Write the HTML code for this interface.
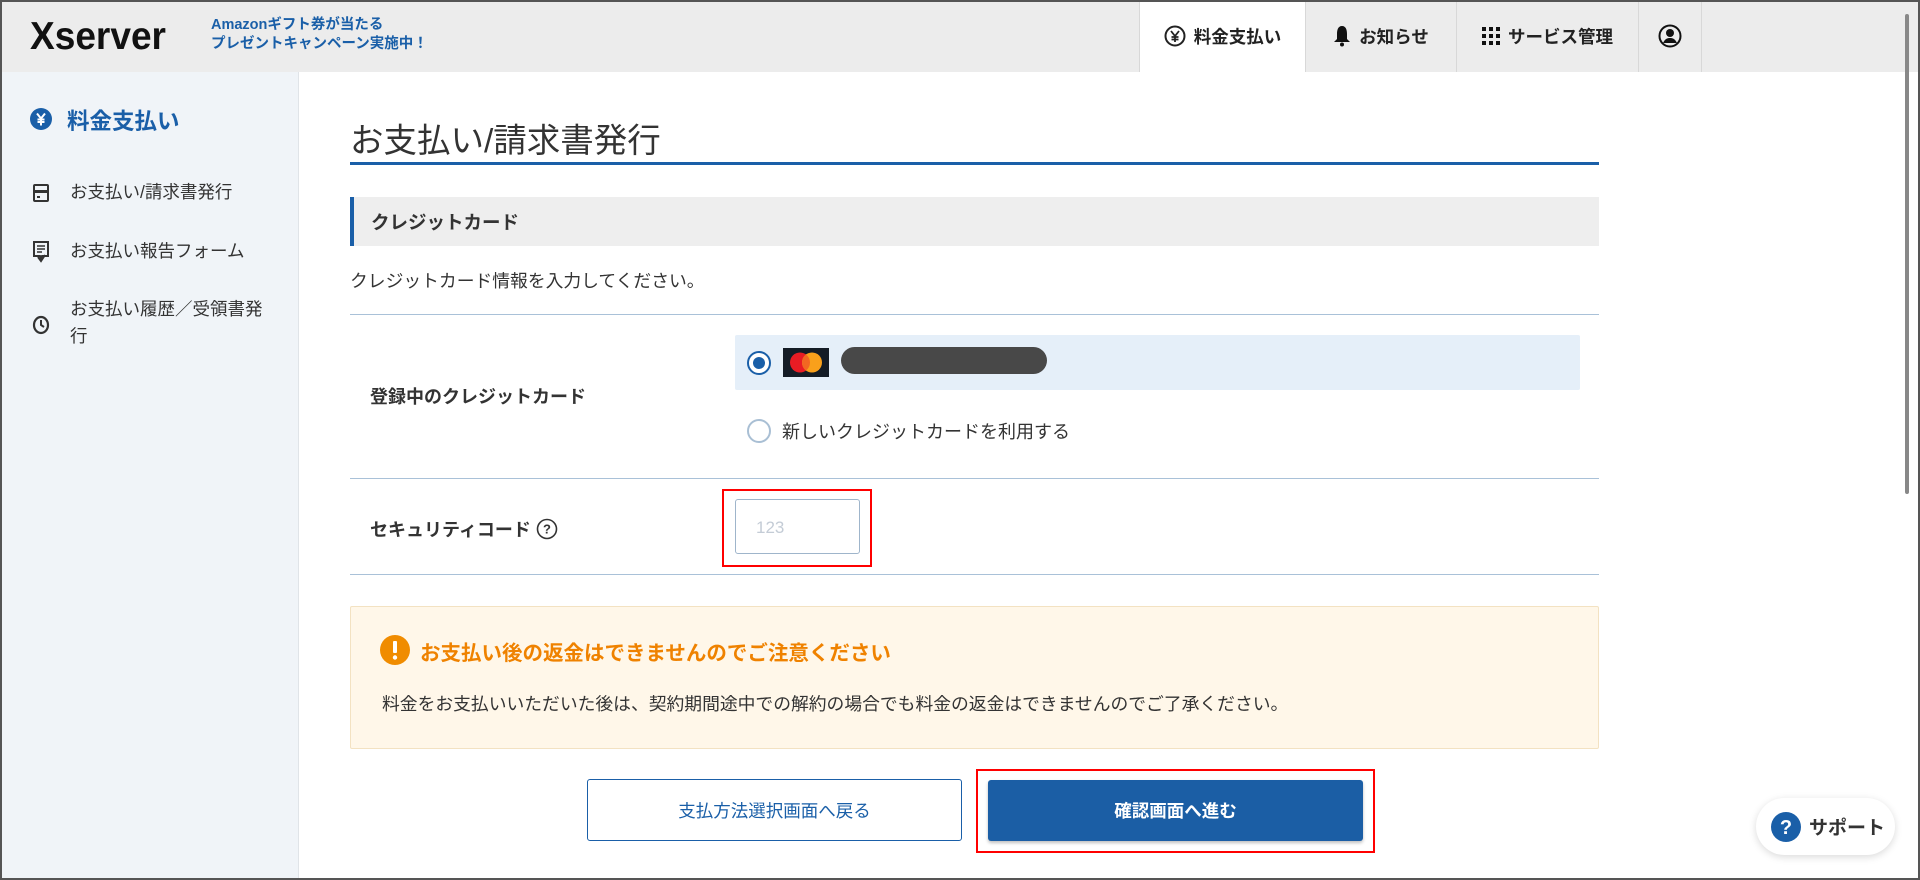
<!DOCTYPE html>
<html><head><meta charset="utf-8"><style>
*{margin:0;padding:0;box-sizing:border-box}
body{width:1920px;height:880px;overflow:hidden;position:relative;background:#fff;font-family:"Liberation Sans","Noto Sans CJK JP",sans-serif;color:#333}
.a{position:absolute}
#frame{left:0;top:0;width:1920px;height:880px;border:2px solid #555;border-top-width:2px;z-index:50;pointer-events:none}
#hdr{left:0;top:0;width:1920px;height:72px;background:#ececec}
.tab{top:0;height:72px;display:flex;align-items:center;justify-content:center;font-size:17.5px;font-weight:bold;color:#222;border-left:1px solid #d8d8d8;gap:8px}
#side{left:0;top:72px;width:299px;height:808px;background:#f0f4f8;border-right:1px solid #e0e4e8}
.si{left:70px;font-size:17.5px;color:#333;line-height:27px}
.hr{left:350px;width:1249px;height:1px;background:#a9c1d8}
</style></head><body>
<div class="a" id="hdr"></div>
<div class="a" style="left:30px;top:15px;font-size:39px;font-weight:bold;color:#111;letter-spacing:0;line-height:44px;transform:scaleX(0.95);transform-origin:left">Xserver</div>
<div class="a" style="left:211px;top:16px;font-size:14.5px;font-weight:bold;color:#1a5fa8;line-height:19px">Amazonギフト券が当たる<br>プレゼントキャンペーン実施中！</div>
<div class="a tab" style="left:1139px;width:166px;background:#fff"><svg width="22" height="22" viewBox="0 0 22 22"><circle cx="11" cy="11" r="9.5" fill="none" stroke="#222" stroke-width="2"/><path d="M7 6l4 5 4-5M11 11v6M7.5 12h7M7.5 14.5h7" stroke="#222" stroke-width="1.8" fill="none"/></svg>料金支払い</div>
<div class="a tab" style="left:1305px;width:151px"><svg width="18" height="22" viewBox="0 0 18 22"><path d="M9 1c-4 0-5 4-5 8v5l-3 3h16l-3-3v-5c0-4-1-8-5-8z" fill="#111"/><circle cx="9" cy="19.5" r="2" fill="#111"/></svg>お知らせ</div>
<div class="a tab" style="left:1456px;width:182px"><svg width="18" height="18" viewBox="0 0 18 18" fill="#111"><rect x="0" y="0" width="4" height="4"/><rect x="7" y="0" width="4" height="4"/><rect x="14" y="0" width="4" height="4"/><rect x="0" y="7" width="4" height="4"/><rect x="7" y="7" width="4" height="4"/><rect x="14" y="7" width="4" height="4"/><rect x="0" y="14" width="4" height="4"/><rect x="7" y="14" width="4" height="4"/><rect x="14" y="14" width="4" height="4"/></svg>サービス管理</div>
<div class="a tab" style="left:1638px;width:64px;border-right:1px solid #d8d8d8"><svg width="24" height="24" viewBox="0 0 24 24"><circle cx="12" cy="12" r="10.5" fill="none" stroke="#111" stroke-width="2"/><circle cx="12" cy="9" r="4" fill="#111"/><path d="M5 19c2-4 4-5 7-5s5 1 7 5z" fill="#111"/></svg></div>
<div class="a" style="left:1905px;top:14px;width:4px;height:480px;background:#888;border-radius:2px"></div>

<div class="a" id="side"></div>
<svg class="a" style="left:30px;top:108px" width="22" height="22" viewBox="0 0 22 22"><circle cx="11" cy="11" r="11" fill="#1a5fa8"/><path d="M7 5.5l4 5 4-5M11 10.5v7M7.5 11.5h7M7.5 14h7" stroke="#fff" stroke-width="2" fill="none"/></svg>
<div class="a" style="left:67px;top:104px;font-size:22.5px;font-weight:bold;color:#1a5fa8">料金支払い</div>
<svg class="a" style="left:33px;top:184px" width="16" height="18" viewBox="0 0 16 18"><rect x="1" y="1" width="14" height="16" rx="1" fill="none" stroke="#333" stroke-width="2"/><rect x="1" y="6" width="14" height="3" fill="#333"/><rect x="4" y="12" width="3" height="2" fill="#333"/></svg>
<div class="a si" style="top:179px">お支払い/請求書発行</div>
<svg class="a" style="left:33px;top:241px" width="16" height="22" viewBox="0 0 16 22"><path d="M1 1h14v14H9l-1 2-1-2H1z" fill="none" stroke="#333" stroke-width="2"/><path d="M4 5h8M4 8h8M4 11h5" stroke="#333" stroke-width="1.5"/><path d="M5 16l3 4 4-6" stroke="#333" stroke-width="2" fill="none"/></svg>
<div class="a si" style="top:238px">お支払い報告フォーム</div>
<svg class="a" style="left:32px;top:315px" width="18" height="20" viewBox="0 0 18 20"><ellipse cx="9" cy="10" rx="7" ry="8" fill="none" stroke="#333" stroke-width="2.2"/><path d="M9 5v5l3 2" stroke="#333" stroke-width="2" fill="none"/></svg>
<div class="a si" style="top:296px">お支払い履歴／受領書発<br>行</div>

<div class="a" style="left:350px;top:113px;font-size:33.5px;color:#333">お支払い/請求書発行</div>
<div class="a" style="left:350px;top:162px;width:1249px;height:3px;background:#1a5fa8"></div>
<div class="a" style="left:350px;top:197px;width:1249px;height:49px;background:#eeeeee;border-left:4px solid #1a5fa8"></div>
<div class="a" style="left:371px;top:209px;font-size:18.5px;font-weight:bold;color:#333">クレジットカード</div>
<div class="a" style="left:350px;top:267px;font-size:17.8px;color:#333">クレジットカード情報を入力してください。</div>
<div class="a hr" style="top:314px"></div>
<div class="a" style="left:370px;top:383px;font-size:18px;font-weight:bold">登録中のクレジットカード</div>
<div class="a" style="left:735px;top:335px;width:845px;height:55px;background:#e5eff9;border-radius:2px"></div>
<svg class="a" style="left:746px;top:350px" width="26" height="26" viewBox="0 0 26 26"><circle cx="13" cy="13" r="11" fill="#fff" stroke="#1a5fa8" stroke-width="2"/><circle cx="13" cy="13" r="6" fill="#1a5fa8"/></svg>
<svg class="a" style="left:783px;top:348px" width="46" height="29" viewBox="0 0 46 29"><rect width="46" height="29" fill="#141c26"/><circle cx="17" cy="14.5" r="10" fill="#e81c24"/><circle cx="29" cy="14.5" r="10" fill="#f9a01b"/><path d="M23 6.5a10 10 0 0 1 0 16a10 10 0 0 1 0-16z" fill="#f26722"/></svg>
<div class="a" style="left:841px;top:347px;width:206px;height:27px;background:#484848;border-radius:14px"></div>
<svg class="a" style="left:746px;top:418px" width="26" height="26" viewBox="0 0 26 26"><circle cx="13" cy="13" r="11" fill="#fff" stroke="#a9bfd4" stroke-width="2"/></svg>
<div class="a" style="left:782px;top:418px;font-size:18px;color:#333">新しいクレジットカードを利用する</div>
<div class="a hr" style="top:478px"></div>
<div class="a" style="left:370px;top:516px;font-size:18px;font-weight:bold">セキュリティコード</div>
<svg class="a" style="left:536px;top:518px" width="22" height="22" viewBox="0 0 22 22"><circle cx="11" cy="11" r="9.5" fill="none" stroke="#333" stroke-width="1.6"/><text x="11" y="15.5" font-size="13" font-weight="bold" text-anchor="middle" fill="#333" font-family="Liberation Sans">?</text></svg>
<div class="a" style="left:722px;top:489px;width:150px;height:78px;border:2px solid #ff0000"></div>
<div class="a" style="left:735px;top:499px;width:125px;height:55px;border:1px solid #9fb5cb;border-radius:3px;background:#fff"></div>
<div class="a" style="left:756px;top:518px;font-size:17px;color:#c4ccd6">123</div>
<div class="a hr" style="top:574px"></div>

<div class="a" style="left:350px;top:606px;width:1249px;height:143px;background:#fff7e9;border:1px solid #f3e2c2;border-radius:2px"></div>
<svg class="a" style="left:380px;top:635px" width="30" height="30" viewBox="0 0 30 30"><circle cx="15" cy="15" r="15" fill="#f08c00"/><rect x="13" y="6" width="4" height="12" rx="1" fill="#fff"/><circle cx="15" cy="22.5" r="2.2" fill="#fff"/></svg>
<div class="a" style="left:420px;top:636px;font-size:20.5px;font-weight:bold;color:#ef8200">お支払い後の返金はできませんのでご注意ください</div>
<div class="a" style="left:382px;top:690px;font-size:17.8px;color:#333">料金をお支払いいただいた後は、契約期間途中での解約の場合でも料金の返金はできませんのでご了承ください。</div>

<div class="a" style="left:587px;top:779px;width:375px;height:62px;border:1px solid #1a5fa8;border-radius:3px;background:#fff;display:flex;align-items:center;justify-content:center;font-size:17.5px;color:#1a5fa8">支払方法選択画面へ戻る</div>
<div class="a" style="left:976px;top:769px;width:399px;height:84px;border:2px solid #ff0000"></div>
<div class="a" style="left:988px;top:780px;width:375px;height:61px;border-radius:3px;background:#1b5ea5;display:flex;align-items:center;justify-content:center;font-size:17.5px;font-weight:bold;color:#fff;box-shadow:0 2px 3px rgba(0,0,0,.25)">確認画面へ進む</div>

<div class="a" style="left:1756px;top:798px;width:139px;height:57px;border-radius:29px;background:#fff;box-shadow:0 2px 8px rgba(0,0,0,.15);display:flex;align-items:center;padding-left:15px;gap:8px;font-size:19px;font-weight:bold;color:#333"><svg width="30" height="30" viewBox="0 0 30 30"><circle cx="15" cy="15" r="15" fill="#1a5fa8"/><text x="15" y="22" font-size="20" font-weight="bold" text-anchor="middle" fill="#fff" font-family="Liberation Sans">?</text></svg>サポート</div>
<div class="a" id="frame"></div>
</body></html>
